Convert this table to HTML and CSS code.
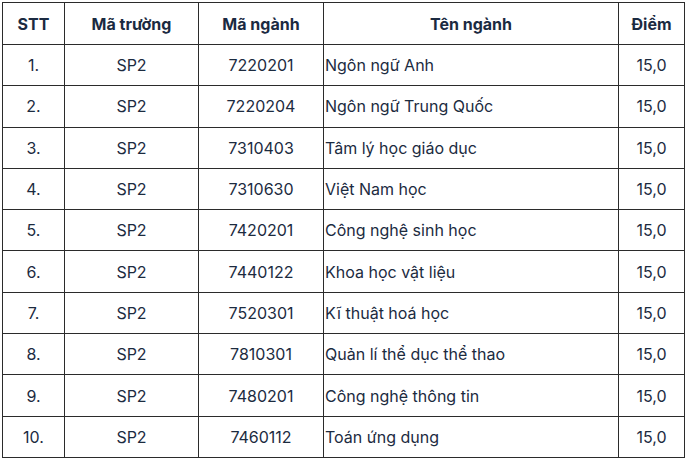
FILE: index.html
```html
<!DOCTYPE html>
<html lang="vi">
<head>
<meta charset="utf-8">
<link rel="stylesheet" href="styles.css">
</head>
<body>
<table class="scores">
  <colgroup>
    <col class="c-stt"><col class="c-truong"><col class="c-ma"><col class="c-ten"><col class="c-diem">
  </colgroup>
  <thead>
    <tr><th>STT</th><th>Mã trường</th><th>Mã ngành</th><th>Tên ngành</th><th>Điểm</th></tr>
  </thead>
  <tbody>
    <tr><td>1.</td><td>SP2</td><td>7220201</td><td class="name">Ngôn ngữ Anh</td><td>15,0</td></tr>
    <tr><td>2.</td><td>SP2</td><td>7220204</td><td class="name">Ngôn ngữ Trung Quốc</td><td>15,0</td></tr>
    <tr><td>3.</td><td>SP2</td><td>7310403</td><td class="name">Tâm lý học giáo dục</td><td>15,0</td></tr>
    <tr><td>4.</td><td>SP2</td><td>7310630</td><td class="name">Việt Nam học</td><td>15,0</td></tr>
    <tr><td>5.</td><td>SP2</td><td>7420201</td><td class="name">Công nghệ sinh học</td><td>15,0</td></tr>
    <tr><td>6.</td><td>SP2</td><td>7440122</td><td class="name">Khoa học vật liệu</td><td>15,0</td></tr>
    <tr><td>7.</td><td>SP2</td><td>7520301</td><td class="name">Kĩ thuật hoá học</td><td>15,0</td></tr>
    <tr><td>8.</td><td>SP2</td><td>7810301</td><td class="name">Quản lí thể dục thể thao</td><td>15,0</td></tr>
    <tr><td>9.</td><td>SP2</td><td>7480201</td><td class="name">Công nghệ thông tin</td><td>15,0</td></tr>
    <tr><td>10.</td><td>SP2</td><td>7460112</td><td class="name">Toán ứng dụng</td><td>15,0</td></tr>
  </tbody>
</table>
</body>
</html>
```
FILE: styles.css
```css
html, body {
  margin: 0;
  padding: 0;
  background: #ffffff;
}
body {
  padding: 2px 0 0 2px;
  font-family: Inter, "Noto Sans", sans-serif;
  font-size: 16px;
  color: #1c2b3f;
}
.scores {
  border-collapse: collapse;
  width: 682px;
  table-layout: fixed;
}
.c-stt { width: 62px; }
.c-truong { width: 134px; }
.c-ma { width: 125px; }
.c-ten { width: 295px; }
.c-diem { width: 66px; }
.scores th,
.scores td {
  border: 1px solid #2b2b2b;
  padding: 0;
  text-align: center;
  vertical-align: middle;
}
.scores th {
  height: 41px;
  font-weight: 700;
  color: #1b2a41;
}
.scores td {
  height: 40.3px;
  font-weight: 400;
}
.scores td.name {
  text-align: left;
  padding-left: 1px;
}
```
